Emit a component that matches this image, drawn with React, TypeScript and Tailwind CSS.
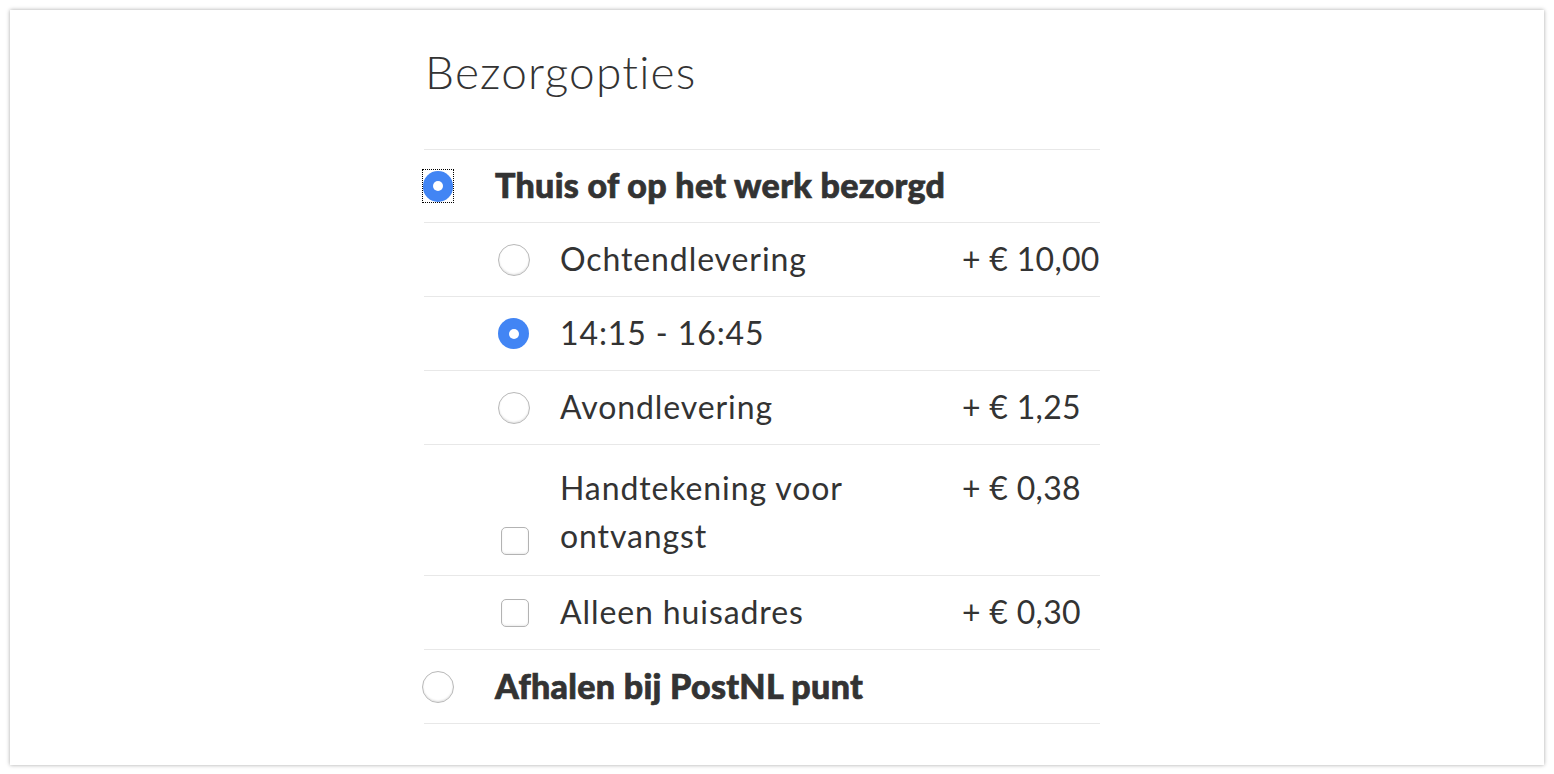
import React from 'react';

function Radio({ checked, focus }: { checked?: boolean; focus?: boolean }) {
  const dot = checked ? (
    <span className="flex h-[31px] w-[31px] items-center justify-center rounded-full bg-[#4285f4]">
      <span className="h-[10px] w-[10px] rounded-full bg-white" />
    </span>
  ) : (
    <span className="block h-[32px] w-[32px] rounded-full border border-[#b9b9b9] bg-white shadow-[inset_0_-1px_2px_rgba(0,0,0,0.12)]" />
  );
  if (!focus) return dot;
  return <span className="flex h-[34px] w-[32px] items-center justify-center border border-dotted border-black">{dot}</span>;
}

function Checkbox() {
  return <span className="ml-[3px] block h-[28px] w-[28px] rounded-[5px] border border-[#b3b3b3] bg-white shadow-[inset_0_-1px_2px_rgba(0,0,0,0.08)]" />;
}

function SubRow({ control, label, price, tall }: { control: React.ReactNode; label: string; price?: string; tall?: boolean }) {
  return (
    <div className={`flex border-b border-[#e8e8e8] ${tall ? 'h-[131px] pt-[19px]' : 'h-[74px] items-center pb-[2px]'}`}>
      <div className="w-[74px] shrink-0" />
      <div className={`flex w-[62px] shrink-0 ${tall ? 'items-end pb-[20px]' : 'items-center pt-[2px]'}`}>{control}</div>
      <div className={`w-[402px] shrink-0 text-[32px] leading-[48px] tracking-[0.9px] ${tall ? 'self-start' : ''}`}>{label}</div>
      <div className={`text-[32px] leading-[48px] tracking-[0.3px] ${tall ? 'self-start' : ''}`}>{price}</div>
    </div>
  );
}

export default function App() {
  return (
    <div className="min-h-screen bg-white p-[10px]" style={{ fontFamily: 'Lato, "Open Sans", sans-serif' }}>
      <div className="h-[755px] bg-white text-[#333] shadow-[0_0_4px_rgba(0,0,0,0.35)]">
        <div className="ml-[414px] w-[676px] pt-[34px]">
          <h1 className="pl-[1px] text-[46px] font-light leading-[56px] tracking-[1.2px]">Bezorgopties</h1>
          <div className="mt-[49px] border-t border-[#e8e8e8]">
            <div className="flex h-[73px] items-center border-b border-[#e8e8e8]">
              <div className="w-[73px] shrink-0 -ml-[2px]">
                <Radio checked focus />
              </div>
              <div className="pb-[3px] text-[34px] font-black tracking-[0.3px] [-webkit-text-stroke:0.7px_#333]">Thuis of op het werk bezorgd</div>
            </div>
            <SubRow control={<Radio />} label="Ochtendlevering" price="+ € 10,00" />
            <SubRow control={<Radio checked />} label="14:15 - 16:45" />
            <SubRow control={<Radio />} label="Avondlevering" price="+ € 1,25" />
            <SubRow control={<Checkbox />} label="Handtekening voor ontvangst" price="+ € 0,38" tall />
            <SubRow control={<Checkbox />} label="Alleen huisadres" price="+ € 0,30" />
            <div className="flex h-[74px] items-center border-b border-[#e8e8e8]">
              <div className="w-[73px] shrink-0 -ml-[2px]">
                <Radio />
              </div>
              <div className="pb-[3px] text-[34px] font-black tracking-[0.3px] [-webkit-text-stroke:0.7px_#333]">Afhalen bij PostNL punt</div>
            </div>
          </div>
        </div>
      </div>
    </div>
  );
}
